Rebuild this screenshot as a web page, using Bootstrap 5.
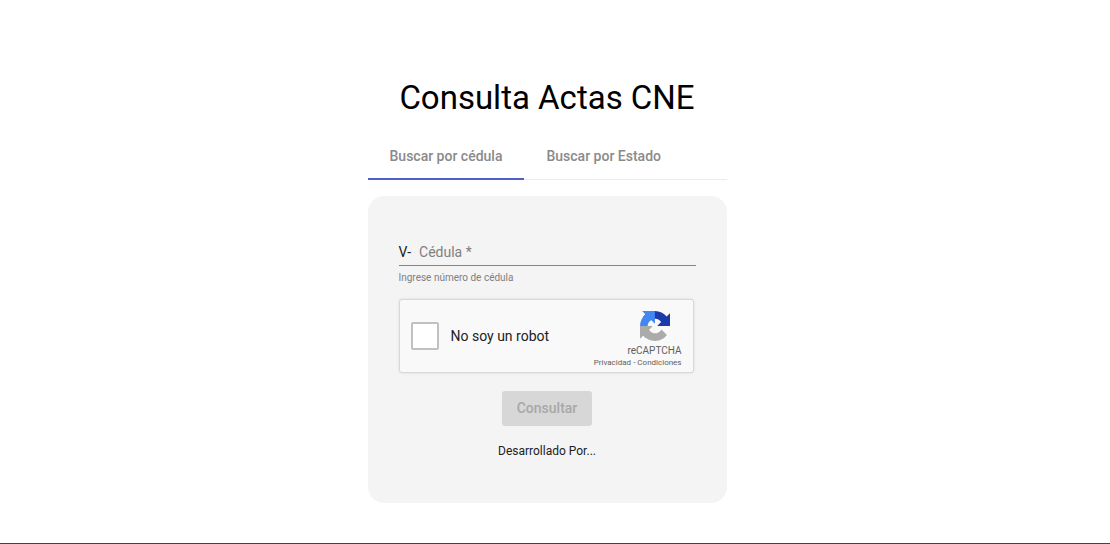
<!DOCTYPE html>
<html lang="es">
<head>
<meta charset="utf-8">
<meta name="viewport" content="width=device-width, initial-scale=1">
<title>Consulta Actas CNE</title>
<link href="https://cdn.jsdelivr.net/npm/bootstrap@5.3.0/dist/css/bootstrap.min.css" rel="stylesheet">
<style>
  body { font-family: Roboto, "Liberation Sans", sans-serif; color: #212121; background: #fff; }
  .page-frame { border-bottom: 1px solid #444; padding: 76px 16px 40px 0; }
  .panel-column { max-width: 359px; }
  .page-title { font-size: 33px; line-height: 44px; font-weight: 400; color: #000; }
  .search-tabs { border-bottom: 1px solid #ebebeb; margin-top: 14px; }
  .search-tabs .nav-link { height: 46px; padding: 0 22px; font-size: 14px; line-height: 44px; font-weight: 500; color: #8a8a8a; border: 0; border-bottom: 2px solid transparent; border-radius: 0; background: none; margin-bottom: -1px; }
  .search-tabs .nav-link.active { border-bottom-color: #4f5fc4; }
  .search-panel { background: #f4f4f4; border-radius: 16px; margin-top: 16px; padding: 46px 31px 44px; }
  .id-field { border-bottom: 1px solid #858585; height: 24px; font-size: 14px; line-height: 20px; }
  .id-field input { height: 20px; font-size: 14px; line-height: 20px; color: #212121; }
  .id-field input::placeholder { color: #808080; opacity: 1; }
  .hint { font-size: 10px; line-height: 12px; color: #808080; margin-top: 6px; }
  .captcha { background: #f9f9f9; border: 1px solid #d8d8d8; border-radius: 3px; box-shadow: 0 0 3px rgba(0,0,0,.1); height: 74px; margin: 15px 2px 0 0; padding: 0 11px; }
  .captcha .form-check-input { width: 28px; height: 28px; border: 2px solid #c1c1c1; border-radius: 2px; background-color: #fff; }
  .captcha-logo { margin: 0 12px 4px 0; }
  .captcha label { font-size: 14px; line-height: 20px; }
  .captcha-brand { font-size: 10px; line-height: 12px; color: #606060; }
  .captcha-links { font-size: 8px; line-height: 12px; gap: 2px; }
  .captcha-links a, .captcha-links span { color: #606060; text-decoration: none; }
  .submit-btn, .submit-btn:disabled { height: 35px; width: 90px; padding: 0; border: 0; border-radius: 3px; font-size: 14px; font-weight: 500; background: #d7d7d7; color: #a8a8a8; opacity: 1; margin-top: 18px; }
  .credit { font-size: 12px; line-height: 16px; margin-top: 17px; }
</style>
</head>
<body>
<main class="page-frame min-vh-100">
  <div class="panel-column mx-auto">
    <h1 class="page-title text-center mb-0">Consulta Actas CNE</h1>
    <ul class="nav search-tabs" role="tablist">
      <li class="nav-item" role="presentation"><button type="button" class="nav-link active" role="tab" aria-selected="true">Buscar por cédula</button></li>
      <li class="nav-item" role="presentation"><button type="button" class="nav-link" role="tab" aria-selected="false">Buscar por Estado</button></li>
    </ul>
    <form class="search-panel">
      <div class="id-field d-flex">
        <label for="cedula">V-</label>
        <input id="cedula" type="text" class="border-0 bg-transparent p-0 ps-2 flex-grow-1 shadow-none" placeholder="Cédula *" required aria-describedby="cedula-hint">
      </div>
      <div id="cedula-hint" class="hint">Ingrese número de cédula</div>
      <div class="captcha d-flex align-items-center">
        <input id="robot" type="checkbox" class="form-check-input m-0 flex-shrink-0">
        <label for="robot" class="ms-2 ps-1">No soy un robot</label>
        <div class="ms-auto d-flex flex-column align-items-end pt-2">
          <svg class="captcha-logo" width="30" height="30" viewBox="0 0 64 64" aria-hidden="true">
            <path fill="#1c3aa9" d="M64 31.955l-.033-1.37V4.687l-7.16 7.16C50.948 4.674 42.033.093 32.05.093c-10.4 0-19.622 4.96-25.458 12.64l11.736 11.86a15.55 15.55 0 0 1 4.754-5.334c2.05-1.6 4.952-2.906 8.968-2.906.485 0 .86.057 1.135.163 4.976.393 9.288 3.14 11.828 7.124l-8.307 8.307L64 31.953"/>
            <path fill="#4285f4" d="M31.862.094l-1.37.033H4.594l7.16 7.16C4.58 13.147 0 22.06 0 32.046c0 10.4 4.96 19.622 12.64 25.458L24.5 45.768a15.55 15.55 0 0 1-5.334-4.754c-1.6-2.05-2.906-4.952-2.906-8.968 0-.485.057-.86.163-1.135.393-4.976 3.14-9.288 7.124-11.828l8.307 8.307L31.86.095"/>
            <path fill="#ababab" d="M.001 32.045l.033 1.37v25.898l7.16-7.16c5.86 7.173 14.774 11.754 24.76 11.754 10.4 0 19.622-4.96 25.458-12.64l-11.736-11.86a15.55 15.55 0 0 1-4.754 5.334c-2.05 1.6-4.952 2.906-8.968 2.906-.485 0-.86-.057-1.135-.163-4.976-.393-9.288-3.14-11.828-7.124l8.307-8.307c-10.522.04-22.4.066-27.295-.005"/>
          </svg>
          <span class="captcha-brand">reCAPTCHA</span>
          <span class="captcha-links d-flex"><a href="#">Privacidad</a><span>-</span><a href="#">Condiciones</a></span>
        </div>
      </div>
      <div class="text-center">
        <button type="submit" class="btn submit-btn" disabled>Consultar</button>
        <p class="credit mb-0">Desarrollado Por...</p>
      </div>
    </form>
  </div>
</main>
<script src="https://cdn.jsdelivr.net/npm/bootstrap@5.3.0/dist/js/bootstrap.bundle.min.js"></script>
</body>
</html>
